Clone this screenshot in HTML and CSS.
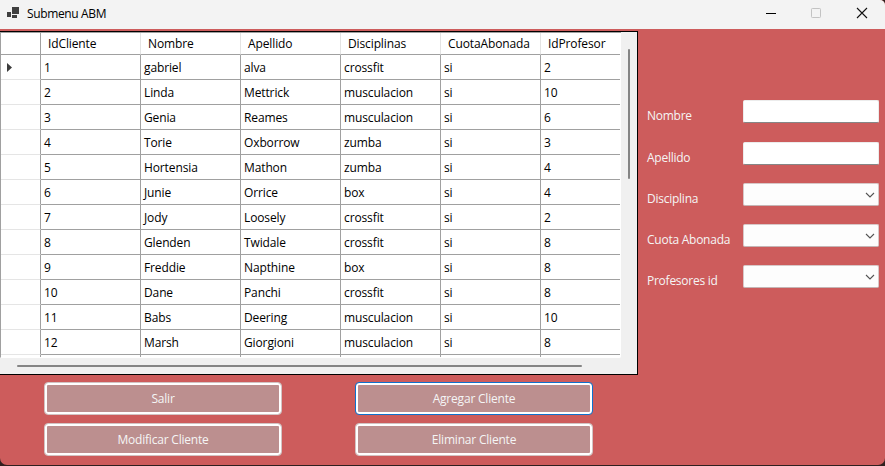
FILE: index.html
```
<!DOCTYPE html>
<html lang="es">
<head>
<meta charset="utf-8">
<title>Submenu ABM</title>
<link rel="stylesheet" href="styles.css">
</head>
<body>
<div class="window">
  <header class="titlebar">
    <svg class="app-icon" width="12" height="12" viewBox="0 0 12 12" fill="#3f3f3f"><path d="M5 0h7v7H5zM0 5h4v5H0zM5 8h5v3H5z"/></svg>
    <h1 class="title">Submenu ABM</h1>
    <svg class="controls" width="104" height="12" viewBox="0 0 104 12" fill="none"><path d="M0 6.5h10" stroke="#000"/><rect x="45.5" y="1.5" width="9" height="9" rx=".8" stroke="#c3c3c3"/><path d="M91 1l10 10M101 1L91 11" stroke="#111" stroke-width="1.1"/></svg>
  </header>
  <main class="content">
    <section class="main-panel">
      <div class="grid-view">
        <div class="viewport">
          <table class="clients">
            <colgroup><col class="c-handle"><col class="c"><col class="c"><col class="c"><col class="c"><col class="c"><col class="c-last"></colgroup>
            <thead><tr><th></th><th>IdCliente</th><th>Nombre</th><th>Apellido</th><th>Disciplinas</th><th>CuotaAbonada</th><th>IdProfesor</th></tr></thead>
            <tbody>
              <tr><td><svg class="marker" width="5" height="9" viewBox="0 0 5 9"><path d="M0 0l5 4.5L0 9z" fill="#3c3c3c"/></svg></td><td>1</td><td>gabriel</td><td>alva</td><td>crossfit</td><td>si</td><td>2</td></tr>
              <tr><td></td><td>2</td><td>Linda</td><td>Mettrick</td><td>musculacion</td><td>si</td><td>10</td></tr>
              <tr><td></td><td>3</td><td>Genia</td><td>Reames</td><td>musculacion</td><td>si</td><td>6</td></tr>
              <tr><td></td><td>4</td><td>Torie</td><td>Oxborrow</td><td>zumba</td><td>si</td><td>3</td></tr>
              <tr><td></td><td>5</td><td>Hortensia</td><td>Mathon</td><td>zumba</td><td>si</td><td>4</td></tr>
              <tr><td></td><td>6</td><td>Junie</td><td>Orrice</td><td>box</td><td>si</td><td>4</td></tr>
              <tr><td></td><td>7</td><td>Jody</td><td>Loosely</td><td>crossfit</td><td>si</td><td>2</td></tr>
              <tr><td></td><td>8</td><td>Glenden</td><td>Twidale</td><td>crossfit</td><td>si</td><td>8</td></tr>
              <tr><td></td><td>9</td><td>Freddie</td><td>Napthine</td><td>box</td><td>si</td><td>8</td></tr>
              <tr><td></td><td>10</td><td>Dane</td><td>Panchi</td><td>crossfit</td><td>si</td><td>8</td></tr>
              <tr><td></td><td>11</td><td>Babs</td><td>Deering</td><td>musculacion</td><td>si</td><td>10</td></tr>
              <tr><td></td><td>12</td><td>Marsh</td><td>Giorgioni</td><td>musculacion</td><td>si</td><td>8</td></tr>
              <tr><td></td><td></td><td></td><td></td><td></td><td></td><td></td></tr>
            </tbody>
          </table>
        </div>
        <div class="vscroll"><div class="vthumb"></div></div>
        <div class="hscroll"><div class="hthumb"></div></div>
      </div>
      <div class="actions">
        <button class="action">Salir</button>
        <button class="action focused">Agregar Cliente</button>
        <button class="action">Modificar Cliente</button>
        <button class="action">Eliminar Cliente</button>
      </div>
    </section>
    <form class="fields">
      <div class="field first"><label>Nombre</label><div class="box text"></div></div>
      <div class="field"><label>Apellido</label><div class="box text"></div></div>
      <div class="field"><label>Disciplina</label><div class="box combo"><svg width="10" height="6" viewBox="0 0 10 6"><path d="M1 1l4 4 4-4"/></svg></div></div>
      <div class="field"><label>Cuota Abonada</label><div class="box combo"><svg width="10" height="6" viewBox="0 0 10 6"><path d="M1 1l4 4 4-4"/></svg></div></div>
      <div class="field"><label>Profesores id</label><div class="box combo"><svg width="10" height="6" viewBox="0 0 10 6"><path d="M1 1l4 4 4-4"/></svg></div></div>
    </form>
  </main>
</div>
</body>
</html>
```
FILE: styles.css
```
* { box-sizing: border-box; }
body {
  margin: 0;
  height: 466px;
  overflow: hidden;
  background: #30201f;
  font: 12px/16px "Open Sans", "Noto Sans", sans-serif;
  color: #000;
}
.window {
  height: 465px;
  background: #cd5c5c;
  border-radius: 0 5px 7px 7px;
  overflow: hidden;
}
.titlebar {
  display: flex;
  align-items: center;
  height: 29px;
  padding: 0 15px 3px 7px;
  background: #f3f3f3;
}
.title {
  margin: 2px 0 0 8px;
  font-size: 12px;
  font-weight: 400;
  letter-spacing: -0.36px;
}
.controls { margin-left: auto; }
.content { display: flex; padding-top: 2px; }
.main-panel { width: 638px; }
.grid-view {
  display: grid;
  grid-template: 326px 16px / 621px 16px;
  border: solid #000;
  border-width: 1px 1px 1px 0;
  background: #f0f0f0;
}
.viewport {
  overflow: hidden;
  background: #fff;
  border: solid #a0a0a0;
  border-width: 1px 0 0 1px;
  border-bottom: 1px solid #fff;
  border-radius: 0 0 2px 0;
}
.clients {
  width: 619px;
  table-layout: fixed;
  border-collapse: separate;
  border-spacing: 0;
}
.c-handle { width: 40px; }
.c { width: 100px; }
.c-last { width: 79px; }
.clients th, .clients td {
  padding: 0 3px;
  text-align: left;
  font-weight: 400;
  letter-spacing: -0.12px;
  white-space: nowrap;
  border: solid #a0a0a0;
  border-width: 0 1px 1px 0;
}
.clients th { height: 22px; padding: 0 7px; border-right-color: #e3e3e3; }
.clients th:first-child { border-right-color: #a0a0a0; }
.clients td { height: 25px; padding-top: 2px; }
.clients td:first-child { border-bottom-color: #e5e5e5; padding: 0 0 0 6px; }
.clients th:last-child, .clients td:last-child { border-right: 0; }
.marker { display: block; margin-top: 1px; }
.vscroll { padding: 17px 0 0 7px; }
.vthumb { width: 2px; height: 130px; border-radius: 1px; background: #858585; }
.hscroll { grid-column: 1 / 3; padding: 7px 0 0 17px; }
.hthumb { width: 565px; height: 2px; border-radius: 1px; background: #858585; }
.actions {
  display: grid;
  grid-template-columns: 238px 238px;
  grid-auto-rows: 33px;
  gap: 8px 73px;
  padding: 7px 0 0 44px;
}
.action {
  padding: 0;
  font: inherit;
  letter-spacing: -0.2px;
  color: #f5f5f5;
  background: #bc8f8f;
  border: 1px solid #d2c4c4;
  border-radius: 4px;
  box-shadow: inset 0 0 0 2px #fff;
}
.focused { border-color: #0f70cc; }
.fields { padding: 69px 0 0 9px; display: flex; flex-direction: column; gap: 18px; }
.field { display: flex; }
.field label {
  width: 96px;
  height: 23px;
  padding-top: 8px;
  color: #f5f5f5;
  letter-spacing: -0.25px;
  white-space: nowrap;
}
.first { margin-bottom: 1px; }
.box { width: 136px; height: 23px; background: #fff; border-radius: 2px; }
.text { border: 1px solid #ececec; border-bottom-color: #868686; }
.combo {
  display: flex;
  align-items: center;
  justify-content: flex-end;
  padding-right: 3px;
  background: #fdfdfd;
  border: 1px solid #d8c8c8;
  border-bottom-color: #c5b5b5;
}
.combo svg { fill: none; stroke: #555; stroke-width: 1.1; }
```
